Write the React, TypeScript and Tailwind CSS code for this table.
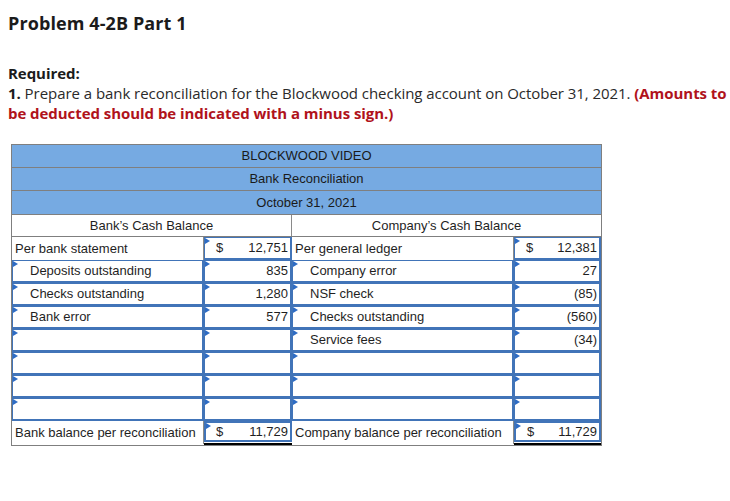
import React from "react";

type Cell = {
  text?: string;
  indent?: boolean;
  input?: boolean;
  dollar?: boolean;
  amount?: boolean;
};

const rows: Cell[][] = [
  [
    { text: "Per bank statement" },
    { text: "12,751", input: true, dollar: true, amount: true },
    { text: "Per general ledger" },
    { text: "12,381", input: true, dollar: true, amount: true },
  ],
  [
    { text: "Deposits outstanding", input: true, indent: true },
    { text: "835", input: true, amount: true },
    { text: "Company error", input: true, indent: true },
    { text: "27", input: true, amount: true },
  ],
  [
    { text: "Checks outstanding", input: true, indent: true },
    { text: "1,280", input: true, amount: true },
    { text: "NSF check", input: true, indent: true },
    { text: "(85)", input: true, amount: true },
  ],
  [
    { text: "Bank error", input: true, indent: true },
    { text: "577", input: true, amount: true },
    { text: "Checks outstanding", input: true, indent: true },
    { text: "(560)", input: true, amount: true },
  ],
  [
    { input: true },
    { input: true, amount: true },
    { text: "Service fees", input: true, indent: true },
    { text: "(34)", input: true, amount: true },
  ],
  [{ input: true }, { input: true, amount: true }, { input: true }, { input: true, amount: true }],
  [{ input: true }, { input: true, amount: true }, { input: true }, { input: true, amount: true }],
  [{ input: true }, { input: true, amount: true }, { input: true }, { input: true, amount: true }],
];

function Marker() {
  return (
    <span className="absolute left-0 top-0 h-0 w-0 border-y-[3px] border-l-[5px] border-y-transparent border-l-[#2e6cc4]" />
  );
}

function DataCell({ cell }: { cell: Cell }) {
  const box = cell.input
    ? "border-l border-t border-r-2 border-b-2 border-[#4174b8]"
    : "border-r border-[#8a8a8a]";
  if (cell.amount) {
    return (
      <div className={`relative flex h-[23px] items-center pr-[2px] ${box}`}>
        {cell.input && <Marker />}
        {cell.dollar && <span className="pl-[11px]">$</span>}
        <span className="ml-auto">{cell.text}</span>
      </div>
    );
  }
  return (
    <div
      className={`relative flex h-[23px] items-center whitespace-nowrap ${cell.indent ? "pl-[17px]" : "pl-[3px]"} ${box}`}
    >
      {cell.input && <Marker />}
      {cell.text}
    </div>
  );
}

function TitleRow({ text, last }: { text: string; last?: boolean }) {
  return (
    <div
      className={`flex h-[23px] items-center justify-center bg-[#76aae2] text-[#1a1a1a] ${last ? "" : "border-b border-[#7f7f7f]"}`}
    >
      {text}
    </div>
  );
}

export default function App() {
  return (
    <div className="min-h-[501px] w-[730px] bg-white font-['Open_Sans',sans-serif] text-[#222]">
      <h1 className="ml-2 pt-[11px] text-[18px] font-bold leading-[24px] tracking-[0.1px] text-[#1b1b1b]">
        Problem 4-2B Part 1
      </h1>

      <div className="ml-2 mt-[28px] whitespace-nowrap text-[15px] leading-[20px] tracking-[-0.05px] text-[#2a2a2a]">
        <p className="font-bold text-[#1b1b1b]">Required:</p>
        <p>
          <span className="font-bold text-[#1b1b1b]">1.</span> Prepare a bank reconciliation for the
          Blockwood checking account on October 31, 2021.{" "}
          <span className="font-bold text-[#b0121b]">(Amounts to</span>
        </p>
        <p className="font-bold text-[#b0121b]">be deducted should be indicated with a minus sign.)</p>
      </div>

      <div className="ml-[11px] mt-[21px] w-[591px] border border-[#7f7f7f] font-['Liberation_Sans',Arial,sans-serif] text-[13px] text-[#1f1f1f]">
        <TitleRow text="BLOCKWOOD VIDEO" />
        <TitleRow text="Bank Reconciliation" />
        <TitleRow text="October 31, 2021" last />

        <div className="grid grid-cols-[280px_309px] border-y border-[#7f7f7f]">
          <div className="flex h-[21px] items-center justify-center border-r border-[#8a8a8a]">
            Bank’s Cash Balance
          </div>
          <div className="flex h-[21px] items-center justify-center">Company’s Cash Balance</div>
        </div>

        <div className="grid grid-cols-[192px_88px_222px_87px]">
          {rows.map((row, i) =>
            row.map((cell, j) => <DataCell key={`${i}-${j}`} cell={cell} />)
          )}

          <div className="flex h-[23px] items-center whitespace-nowrap border-r border-[#8a8a8a] pl-[3px]">
            Bank balance per reconciliation
          </div>
          <div className="border-b-2 border-black bg-white pb-[1px]">
            <div className="relative flex h-[21px] items-center border-2 border-[#4174b8] pr-[2px]">
              <Marker />
              <span className="pl-[10px]">$</span>
              <span className="ml-auto">11,729</span>
            </div>
          </div>
          <div className="flex h-[23px] items-center whitespace-nowrap border-r border-[#8a8a8a] pl-[3px]">
            Company balance per reconciliation
          </div>
          <div className="border-b-2 border-black pb-[1px]">
            <div className="relative flex h-[21px] items-center border-2 border-[#4174b8] pr-[2px]">
              <Marker />
              <span className="pl-[11px]">$</span>
              <span className="ml-auto">11,729</span>
            </div>
          </div>
        </div>
      </div>
    </div>
  );
}
